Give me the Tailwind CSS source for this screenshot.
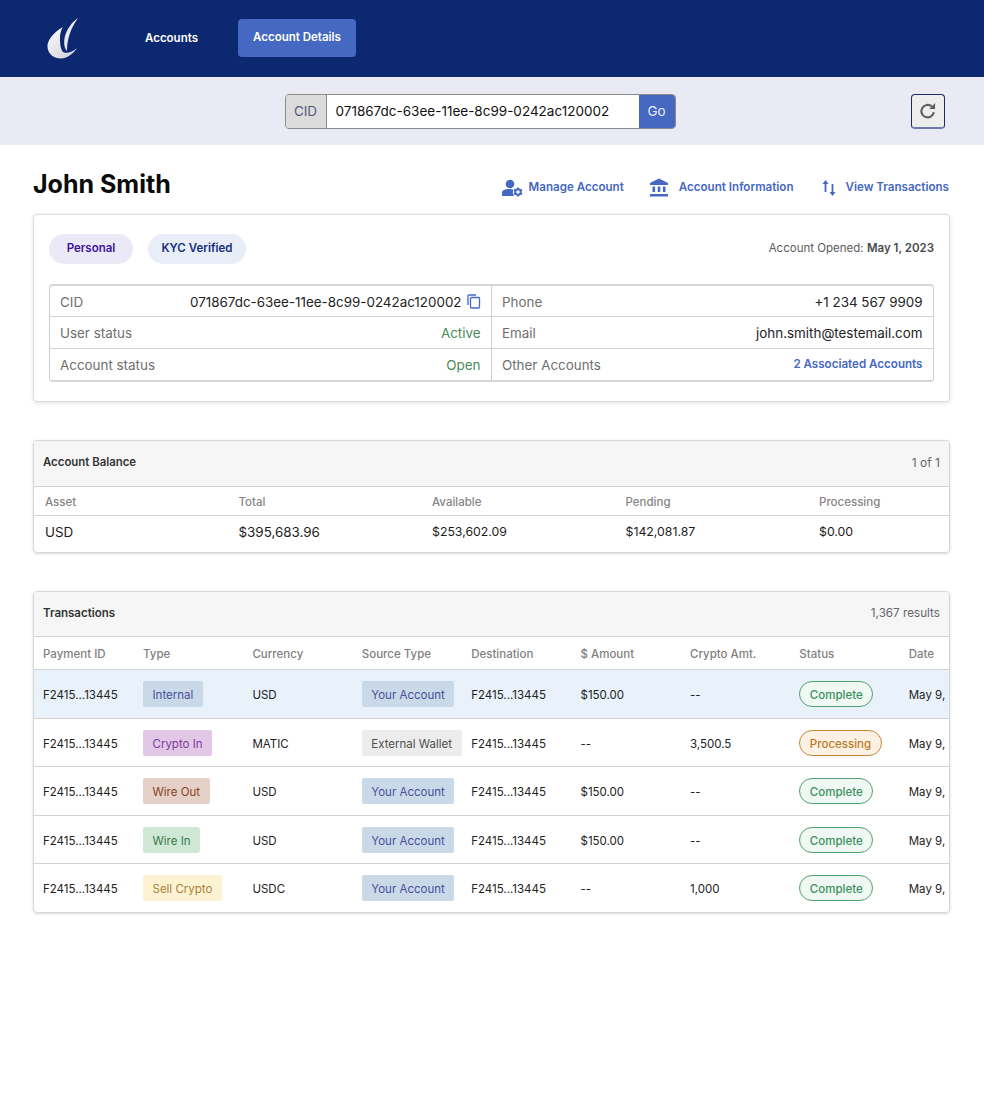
<!DOCTYPE html>
<html><head><meta charset="utf-8">
<script src="https://cdn.jsdelivr.net/npm/@tailwindcss/browser@4"></script>
</head>
<body class="bg-white font-['Inter',sans-serif] text-black h-[1100px] overflow-hidden">
<header class="h-[77px] bg-[#0b2870] flex items-center pl-[47px]">
  <svg class="w-[31px] h-[41px] shrink-0" viewBox="0 0 31 41"><defs><linearGradient id="g" x1="0" y1="0" x2="1" y2="1"><stop offset="0" stop-color="#ffffff"/><stop offset="1" stop-color="#c9ccd4"/></linearGradient></defs><path d="M16 9 C7 14 0 22 0.500 29 C1 36 7 40.500 14 40.500 C20 40.500 26 36 30 30 C26 33.500 21 35.500 17 34.500 C13.500 33 13 25 13 20 C13 15.500 14 12 16 9 Z" fill="url(#g)"/><path d="M31 0 C25 4 20 11 18 18 C16.500 24 17 30 20 33 C20 26 21 14 31 0 Z" fill="#e8e9ec"/></svg>
  <nav class="flex items-center ml-[45px] text-[11.5px] font-semibold text-white">
    <a class="px-[22px] py-[15px]">Accounts</a>
    <a class="ml-[18px] mb-[2px] w-[118px] h-[38px] flex items-center justify-center rounded-[4px] bg-[#4568c2]">Account Details</a>
  </nav>
</header>
<div class="h-[68px] bg-[#eaeaf5] relative flex items-center justify-center pr-[24px]">
  <div class="flex h-[35px] w-[391px] rounded-[4px] border border-[#8a8a8f] overflow-hidden text-[13.5px]">
    <span class="w-[41px] bg-[#dcdcdc] border-r border-[#8a8a8f] flex items-center justify-center text-[#555a7c]">CID</span>
    <span class="flex-1 bg-white flex items-center pl-[9px] text-[#111]">071867dc-63ee-11ee-8c99-0242ac120002</span>
    <span class="w-[36px] bg-[#4568c2] flex items-center justify-center text-[#e8ecf8]">Go</span>
  </div>
  <button class="absolute left-[911px] top-[17px] w-[34px] h-[35px] rounded-[4px] border border-[#1f2a6b] border-b-2 border-b-[#7378ad] bg-[#ededed] flex items-center justify-center">
    <svg class="w-[20px] h-[20px]" viewBox="0 0 24 24" fill="none" stroke="#5f5f5f" stroke-width="2.600"><path d="M19 13.500 A7.500 7.500 0 1 1 16.500 6.500"/><path d="M20.500 2.500 V9.500 H13.500 Z" fill="#5f5f5f" stroke="none"/></svg>
  </button>
</div>
<main class="pl-[33px] pr-[34px]">
  <div class="flex items-center justify-between h-[69px]">
    <h1 class="text-[25px] font-bold leading-none pt-[10px] text-[#0a0a0a]">John Smith</h1>
    <div class="flex items-center pt-[16px] pr-[1px] text-[11.6px] font-semibold text-[#4568c2]">
      <svg class="w-[22px] h-[18px] mr-[6px]" viewBox="0 0 22 18" fill="#4568c2"><circle cx="9" cy="5" r="4.300"/><path d="M1 17 V14 C1 11 4 10 8 10 C10 10 11.500 10.300 12.500 11 C11.500 13 11.800 15 13 17 Z"/><circle cx="17" cy="13" r="2.800" fill="none" stroke="#4568c2" stroke-width="2"/><path d="M17 8.500 V10 M17 16 V17.500 M13 10.800 L14.400 11.500 M19.600 14.500 L21 15.200 M13 15.200 L14.400 14.500 M19.600 11.500 L21 10.800" stroke="#4568c2" stroke-width="1.800"/></svg>
      <span>Manage Account</span>
      <svg class="w-[20px] h-[19px] ml-[25px] mr-[10px]" viewBox="0 0 20 19" fill="#4568c2"><path d="M10 0.500 L19 5 V7 H1 V5 Z"/><rect x="3.500" y="8.500" width="2.600" height="5.500"/><rect x="8.700" y="8.500" width="2.600" height="5.500"/><rect x="13.900" y="8.500" width="2.600" height="5.500"/><rect x="1" y="16" width="18" height="2.500"/></svg>
      <span>Account Information</span>
      <svg class="w-[16px] h-[18px] ml-[27px] mr-[9px]" viewBox="0 0 16 18" fill="none" stroke="#4568c2" stroke-width="1.800"><path d="M4.500 13 V3"/><path d="M1.500 5 L4.500 1 L7.500 5 Z" fill="#4568c2" stroke="none"/><path d="M11.500 5 V15"/><path d="M8.500 13 L11.500 17 L14.500 13 Z" fill="#4568c2" stroke="none"/></svg>
      <span>View Transactions</span>
    </div>
  </div>

  <section class="h-[188px] rounded-[4px] border border-[#dcdcdc] shadow-[0_1px_4px_rgba(0,0,0,0.12)] px-[15px]">
    <div class="flex items-center justify-between h-[67px]">
      <div class="flex gap-[15px] text-[11.5px] font-semibold">
        <span class="h-[30px] w-[84px] justify-center flex items-center rounded-full bg-[#ebe9f8] text-[#3a12a0]">Personal</span>
        <span class="h-[30px] w-[98px] justify-center flex items-center rounded-full bg-[#e9edf7] text-[#12307e]">KYC Verified</span>
      </div>
      <p class="text-[11.5px] text-[#5c5c5c]">Account Opened: <b class="font-semibold text-[#4a4a4a]">May 1, 2023</b></p>
    </div>
    <div class="mt-[2px] grid grid-cols-2 h-[98px] rounded-[4px] border border-[#cfcfcf] border-t-2 border-b-2 border-t-[#d6d6d6] border-b-[#d6d6d6] text-[13.4px]">
      <div class="border-r border-[#cfcfcf] grid grid-rows-3">
        <div class="flex items-center justify-between pt-[2px] px-[10px] border-b border-[#d2d2d2]"><span class="text-[#6f6f6f]">CID</span><span class="flex items-center text-[#222]">071867dc-63ee-11ee-8c99-0242ac120002<svg class="w-[14px] h-[15px] ml-[5px] mb-[2px]" viewBox="0 0 14 15" fill="none" stroke="#4568c2" stroke-width="1.300"><rect x="3.500" y="3.500" width="9" height="10.500" rx="1"/><path d="M1 11 V2 A1 1 0 0 1 2 1 H9"/></svg></span></div>
        <div class="flex items-center justify-between pt-[2px] px-[10px] border-b border-[#d2d2d2]"><span class="text-[#6f6f6f]">User status</span><span class="text-[#4b8a58]">Active</span></div>
        <div class="flex items-center justify-between pt-[2px] px-[10px]"><span class="text-[#6f6f6f]">Account status</span><span class="text-[#4b8a58]">Open</span></div>
      </div>
      <div class="grid grid-rows-3">
        <div class="flex items-center justify-between pt-[2px] px-[10.500px] border-b border-[#d2d2d2]"><span class="text-[#6f6f6f]">Phone</span><span class="text-[#222]">+1 234 567 9909</span></div>
        <div class="flex items-center justify-between pt-[2px] px-[10.500px] border-b border-[#d2d2d2]"><span class="text-[#6f6f6f]">Email</span><span class="text-[#222]">john.smith@testemail.com</span></div>
        <div class="flex items-center justify-between pt-[2px] px-[10.500px]"><span class="text-[#6f6f6f]">Other Accounts</span><span class="text-[11.6px] font-semibold text-[#4568c2] mb-[1px]">2 Associated Accounts</span></div>
      </div>
    </div>
  </section>

  <section class="mt-[38px] h-[113px] rounded-[4px] border border-[#d6d6d6] shadow-[0_1px_3px_rgba(0,0,0,0.15)] overflow-hidden">
    <div class="h-[46px] bg-[#f6f6f6] border-b border-[#d2d2d2] flex items-center justify-between px-[9px] pb-[2px] text-[11.4px]">
      <span class="font-semibold text-[#333]">Account Balance</span><span class="text-[#666] text-[12px]">1 of 1</span>
    </div>
    <div class="grid grid-cols-[193.500px_193.500px_193.500px_193.500px_1fr] pl-[11px] pt-[4px] h-[29px] items-center border-b border-[#d2d2d2] text-[11.5px] font-medium text-[#858585]">
      <span>Asset</span><span>Total</span><span>Available</span><span>Pending</span><span>Processing</span>
    </div>
    <div class="grid grid-cols-[193.500px_193.500px_193.500px_193.500px_1fr] pl-[11px] pb-[3px] h-[35px] items-center text-[#1c1c1c] text-[12.3px]">
      <span class="text-[13.4px] pt-[1px]">USD</span><span class="text-[13.4px] pt-[1px]">$395,683.96</span><span>$253,602.09</span><span>$142,081.87</span><span>$0.00</span>
    </div>
  </section>

  <section class="mt-[38px] rounded-[4px] border border-[#d6d6d6] shadow-[0_1px_3px_rgba(0,0,0,0.15)] overflow-hidden text-[11.5px] text-[#222]">
    <div class="h-[45px] bg-[#f6f6f6] border-b border-[#d2d2d2] flex items-center justify-between px-[9px] pb-[1px]">
      <span class="font-semibold text-[#333]">Transactions</span><span class="text-[#666] text-[11.7px]">1,367 results</span>
    </div>
    <div class="grid grid-cols-[100px_109.400px_109.400px_109.400px_109.400px_109.400px_109.400px_109.400px_1fr] pl-[9px] pt-[4px] h-[33px] items-center border-b border-[#d2d2d2] font-medium text-[#7f7f7f] whitespace-nowrap">
      <span>Payment ID</span><span>Type</span><span>Currency</span><span>Source Type</span><span>Destination</span><span>$ Amount</span><span>Crypto Amt.</span><span>Status</span><span>Date</span>
    </div>

    <div class="grid grid-cols-[100px_109.400px_109.400px_109.400px_109.400px_109.400px_109.400px_109.400px_1fr] pl-[9px] h-[49px] items-center border-b border-[#d2d2d2] bg-[#e9f1fa] whitespace-nowrap">
      <span class="pt-[4px]">F2415...13445</span><span><span class="inline-flex items-center h-[26px] pt-[4px] px-[9.500px] rounded-[2px] bg-[#c9d9e8] text-[#4a4f9e]">Internal</span></span><span class="pt-[4px]">USD</span><span><span class="inline-flex items-center h-[26px] pt-[4px] px-[9.500px] rounded-[2px] bg-[#c9d9e8] text-[#4a4f9e]">Your Account</span></span><span class="pt-[4px]">F2415...13445</span><span class="pt-[4px]">$150.00</span><span class="pt-[4px]">--</span><span><span class="inline-flex items-center h-[26px] pt-[4px] px-[9.500px] rounded-full border border-[#4fa072] bg-[#f0f8f3] text-[#3a9060] font-medium">Complete</span></span><span class="pt-[4px]">May 9, 2023</span>
    </div>
    <div class="grid grid-cols-[100px_109.400px_109.400px_109.400px_109.400px_109.400px_109.400px_109.400px_1fr] pl-[9px] h-[48px] items-center border-b border-[#d2d2d2] whitespace-nowrap">
      <span class="pt-[4px]">F2415...13445</span><span><span class="inline-flex items-center h-[26px] pt-[4px] px-[9.500px] rounded-[2px] bg-[#e2c8e6] text-[#7a3a9e]">Crypto In</span></span><span class="pt-[4px]">MATIC</span><span><span class="inline-flex items-center h-[26px] pt-[4px] px-[9.500px] rounded-[2px] bg-[#ececec] text-[#4f4f4f]">External Wallet</span></span><span class="pt-[4px]">F2415...13445</span><span class="pt-[4px]">--</span><span class="pt-[4px]">3,500.5</span><span><span class="inline-flex items-center h-[26px] pt-[4px] px-[9.500px] rounded-full border border-[#c4883a] bg-[#fdf1e3] text-[#bb7a28] font-medium">Processing</span></span><span class="pt-[4px]">May 9, 2023</span>
    </div>
    <div class="grid grid-cols-[100px_109.400px_109.400px_109.400px_109.400px_109.400px_109.400px_109.400px_1fr] pl-[9px] h-[49px] items-center border-b border-[#d2d2d2] whitespace-nowrap">
      <span class="pt-[4px]">F2415...13445</span><span><span class="inline-flex items-center h-[26px] pt-[4px] px-[9.500px] rounded-[2px] bg-[#e4d0c6] text-[#8a3f2a]">Wire Out</span></span><span class="pt-[4px]">USD</span><span><span class="inline-flex items-center h-[26px] pt-[4px] px-[9.500px] rounded-[2px] bg-[#c9d9e8] text-[#4a4f9e]">Your Account</span></span><span class="pt-[4px]">F2415...13445</span><span class="pt-[4px]">$150.00</span><span class="pt-[4px]">--</span><span><span class="inline-flex items-center h-[26px] pt-[4px] px-[9.500px] rounded-full border border-[#4fa072] bg-[#f0f8f3] text-[#3a9060] font-medium">Complete</span></span><span class="pt-[4px]">May 9, 2023</span>
    </div>
    <div class="grid grid-cols-[100px_109.400px_109.400px_109.400px_109.400px_109.400px_109.400px_109.400px_1fr] pl-[9px] h-[48px] items-center border-b border-[#d2d2d2] whitespace-nowrap">
      <span class="pt-[4px]">F2415...13445</span><span><span class="inline-flex items-center h-[26px] pt-[4px] px-[9.500px] rounded-[2px] bg-[#cfe8d6] text-[#39794a]">Wire In</span></span><span class="pt-[4px]">USD</span><span><span class="inline-flex items-center h-[26px] pt-[4px] px-[9.500px] rounded-[2px] bg-[#c9d9e8] text-[#4a4f9e]">Your Account</span></span><span class="pt-[4px]">F2415...13445</span><span class="pt-[4px]">$150.00</span><span class="pt-[4px]">--</span><span><span class="inline-flex items-center h-[26px] pt-[4px] px-[9.500px] rounded-full border border-[#4fa072] bg-[#f0f8f3] text-[#3a9060] font-medium">Complete</span></span><span class="pt-[4px]">May 9, 2023</span>
    </div>
    <div class="grid grid-cols-[100px_109.400px_109.400px_109.400px_109.400px_109.400px_109.400px_109.400px_1fr] pl-[9px] h-[48px] items-center whitespace-nowrap">
      <span class="pt-[4px]">F2415...13445</span><span><span class="inline-flex items-center h-[26px] pt-[4px] px-[9.500px] rounded-[2px] bg-[#fdf3d2] text-[#a58140]">Sell Crypto</span></span><span class="pt-[4px]">USDC</span><span><span class="inline-flex items-center h-[26px] pt-[4px] px-[9.500px] rounded-[2px] bg-[#c9d9e8] text-[#4a4f9e]">Your Account</span></span><span class="pt-[4px]">F2415...13445</span><span class="pt-[4px]">--</span><span class="pt-[4px]">1,000</span><span><span class="inline-flex items-center h-[26px] pt-[4px] px-[9.500px] rounded-full border border-[#4fa072] bg-[#f0f8f3] text-[#3a9060] font-medium">Complete</span></span><span class="pt-[4px]">May 9, 2023</span>
    </div>
  </section>
</main>
</body></html>
